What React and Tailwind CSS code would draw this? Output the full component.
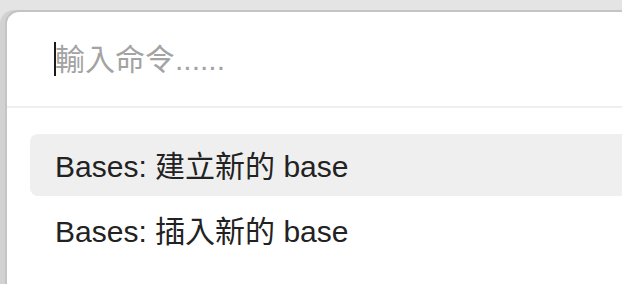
import React from 'react';

const commands = [
    { label: 'Bases: 建立新的 base', active: true },
    { label: 'Bases: 插入新的 base', active: false },
];

const App = () => {
    return (
        <div
            className="w-[622px] h-[284px] overflow-hidden bg-[#e4e4e4] pt-[10px] pl-[5px]"
            style={{ fontFamily: '"Liberation Sans", "Noto Sans CJK TC", sans-serif' }}
        >
            <div className="w-[720px] h-[300px] bg-white rounded-tl-[14px] border-l-2 border-t-2 border-[#c4c4c4] shadow-[-5px_0_0_#d2d2d2]">
                {/* Search input */}
                <div className="h-[96px] flex items-center pl-[47px] border-b-2 border-[#efefef]">
                    <span className="w-[2px] h-[34px] bg-[#1a1a1a]"></span>
                    <span className="text-[30px] leading-[34px] text-[#a3a3a3] -ml-[1px] pt-[2px]">輸入命令......</span>
                </div>

                {/* Suggestions */}
                <div className="pt-[26px] pl-[23px] flex flex-col gap-[3px]">
                    {commands.map((cmd, index) => (
                        <div
                            key={index}
                            className={`h-[62px] flex items-center pl-[25px] rounded-[8px] ${cmd.active ? 'bg-[#efefef]' : ''}`}
                        >
                            <span className="text-[30px] leading-[34px] text-[#222222] pt-[3px]">{cmd.label}</span>
                        </div>
                    ))}
                </div>
            </div>
        </div>
    );
};

export default App;
